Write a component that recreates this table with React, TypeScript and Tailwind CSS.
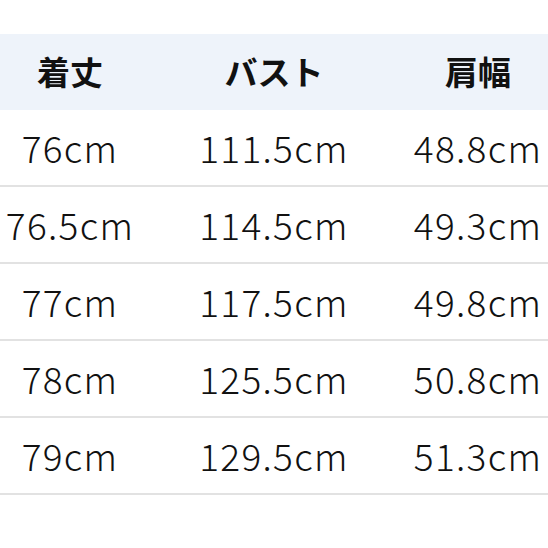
const rows = [
  ["76cm", "111.5cm", "48.8cm"],
  ["76.5cm", "114.5cm", "49.3cm"],
  ["77cm", "117.5cm", "49.8cm"],
  ["78cm", "125.5cm", "50.8cm"],
  ["79cm", "129.5cm", "51.3cm"],
];

export default function App() {
  return (
    <div className="h-[548px] w-[548px] overflow-hidden bg-white pt-[34px] text-[#111]">
      <div className="grid h-[76px] grid-cols-[140px_268px_1fr] items-center bg-[#eef3fa] text-[33px] font-bold [font-family:'Noto_Sans_CJK_JP',sans-serif]">
        <div className="text-center">着丈</div>
        <div className="text-center">バスト</div>
        <div className="text-center">肩幅</div>
      </div>
      {rows.map((r) => (
        <div
          key={r[0]}
          className="grid h-[77px] grid-cols-[140px_268px_1fr] items-center border-b-2 border-[#e2e2e2] text-[37px] font-light leading-none tracking-[1.3px] [font-family:'Noto_Sans_CJK_JP',sans-serif]"
        >
          {r.map((c, i) => (
            <div key={i} className="whitespace-nowrap text-center">
              {c}
            </div>
          ))}
        </div>
      ))}
    </div>
  );
}
